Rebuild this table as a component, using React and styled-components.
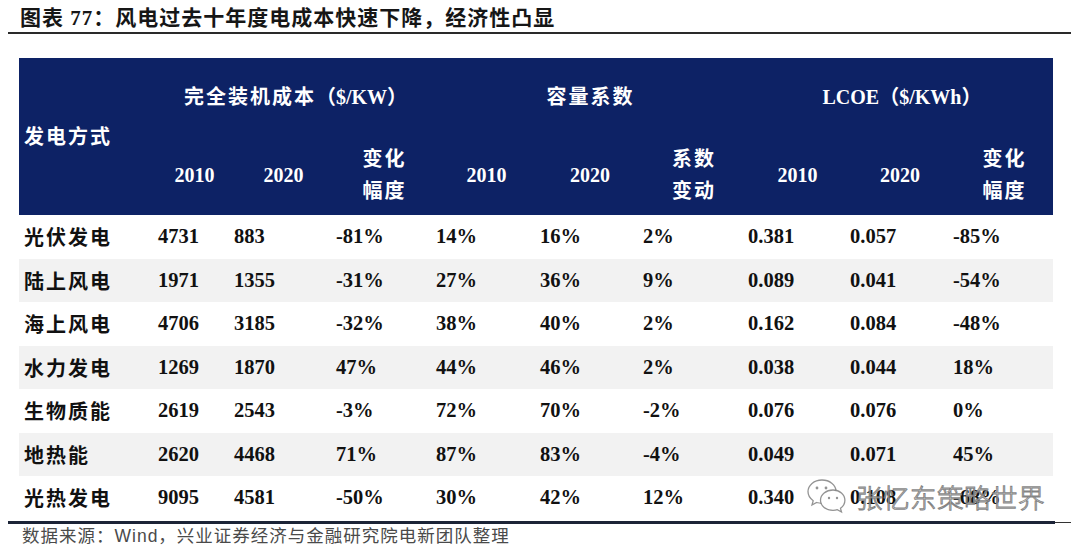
import React from "react";
import styled, { createGlobalStyle } from "styled-components";

const GlobalStyle = createGlobalStyle`
  html, body {
    margin: 0;
    padding: 0;
    background: #ffffff;
  }
  body {
    font-family: "Liberation Serif", "Noto Sans CJK SC", serif;
  }
`;

const Page = styled.div`
  position: relative;
  width: 1080px;
  height: 549px;
  overflow: hidden;
  background: #fff;
`;

const Title = styled.div`
  height: 32px;
  padding-left: 20px;
  display: flex;
  align-items: center;
  font-family: "Liberation Serif", "Noto Sans CJK SC", serif;
  font-weight: 700;
  font-size: 21px;
  letter-spacing: 1px;
  color: #161616;
  white-space: nowrap;
`;

const TitleRule = styled.div`
  margin-left: 8px;
  width: 1063px;
  height: 2px;
  background: #2a2a2a;
`;

const Table = styled.div`
  margin: 24px 0 0 19px;
  width: 1034px;
`;

const cols = "133px 76px 102px 100px 104px 103px 105px 102px 103px 106px";

const Head = styled.div`
  display: grid;
  grid-template-columns: ${cols};
  grid-template-rows: 77px 80px;
  background: #0d2265;
  color: #ffffff;
  font-weight: 700;
  font-size: 20px;
`;

const HeadCell = styled.div`
  display: flex;
  align-items: center;
  justify-content: ${(p) => (p.$left ? "flex-start" : "center")};
  padding-left: ${(p) => (p.$left ? "5px" : "9px")};
  grid-column: ${(p) => p.$col || "auto"};
  grid-row: ${(p) => p.$row || "auto"};
  letter-spacing: ${(p) => (p.$cjk ? "2px" : "0")};
  line-height: 32px;
  text-align: left;
  white-space: nowrap;
`;

const Row = styled.div`
  display: grid;
  grid-template-columns: ${cols};
  height: 43.5px;
  background: ${(p) => (p.$striped ? "#f2f2f2" : "#ffffff")};
  color: #111;
  font-weight: 700;
  font-size: 20.5px;
`;

const Cell = styled.div`
  display: flex;
  align-items: center;
  padding-left: ${(p) => (p.$first ? "5px" : "6px")};
  letter-spacing: ${(p) => (p.$first ? "2px" : "0")};
  font-size: ${(p) => (p.$first ? "20px" : "inherit")};
  white-space: nowrap;
`;

const BottomRule = styled.div`
  position: relative;
  margin: 1px 0 0 8px;
  width: 1047px;
  height: 3px;
  background: #1c2437;
  &::after {
    content: "";
    position: absolute;
    left: 1047px;
    top: 1px;
    width: 16px;
    height: 1px;
    background: #333;
  }
`;

const Source = styled.div`
  padding: 1px 0 0 22px;
  line-height: 22px;
  font-family: "Liberation Sans", "Noto Sans CJK SC", sans-serif;
  font-size: 17.5px;
  letter-spacing: 1px;
  color: #4a4a4a;
  white-space: nowrap;
`;

const Watermark = styled.div`
  position: absolute;
  left: 806px;
  top: 476px;
  display: flex;
  align-items: center;
  gap: 8px;
  pointer-events: none;
`;

const MarkText = styled.span`
  font-family: "Noto Sans CJK SC", sans-serif;
  font-weight: 300;
  font-size: 26.5px;
  color: rgba(255, 255, 255, 0.7);
  -webkit-text-stroke: 1px rgba(110, 110, 110, 0.85);
  letter-spacing: 0.5px;
`;

const WeChatIcon = () => (
  <svg width="42" height="40" viewBox="0 0 42 40" fill="rgba(255,255,255,0.6)">
    <path
      d="M16 4C8 4 2 9.2 2 15.6c0 3.7 2 6.9 5.2 9.1L6 29l4.6-2.5c1.7.5 3.5.8 5.4.8"
      stroke="rgba(120,120,120,0.8)"
      strokeWidth="1.3"
    />
    <path
      d="M16 4c7.6 0 13.7 4.8 14 10.9"
      stroke="rgba(120,120,120,0.8)"
      strokeWidth="1.3"
      fill="none"
    />
    <path
      d="M27 14c-7 0-12.5 4.6-12.5 10.2S20 34.4 27 34.4c1.5 0 3-.2 4.3-.7L35.5 36l-1-3.7c2.7-1.9 4.4-4.7 4.4-8C38.9 18.6 33.6 14 27 14z"
      stroke="rgba(120,120,120,0.8)"
      strokeWidth="1.3"
    />
    <circle cx="11" cy="12" r="1.4" fill="rgba(120,120,120,0.8)" />
    <circle cx="20" cy="12" r="1.4" fill="rgba(120,120,120,0.8)" />
    <circle cx="23" cy="22" r="1.2" fill="rgba(120,120,120,0.8)" />
    <circle cx="31" cy="22" r="1.2" fill="rgba(120,120,120,0.8)" />
  </svg>
);

const rows = [
  ["光伏发电", "4731", "883", "-81%", "14%", "16%", "2%", "0.381", "0.057", "-85%"],
  ["陆上风电", "1971", "1355", "-31%", "27%", "36%", "9%", "0.089", "0.041", "-54%"],
  ["海上风电", "4706", "3185", "-32%", "38%", "40%", "2%", "0.162", "0.084", "-48%"],
  ["水力发电", "1269", "1870", "47%", "44%", "46%", "2%", "0.038", "0.044", "18%"],
  ["生物质能", "2619", "2543", "-3%", "72%", "70%", "-2%", "0.076", "0.076", "0%"],
  ["地热能", "2620", "4468", "71%", "87%", "83%", "-4%", "0.049", "0.071", "45%"],
  ["光热发电", "9095", "4581", "-50%", "30%", "42%", "12%", "0.340", "0.108", "-68%"],
];

export default function App() {
  return (
    <Page>
      <GlobalStyle />
      <Title>图表 77：风电过去十年度电成本快速下降，经济性凸显</Title>
      <TitleRule />
      <Table>
        <Head>
          <HeadCell $left $cjk $col="1" $row="1 / span 2">发电方式</HeadCell>
          <HeadCell $col="2 / span 3" $row="1">
            <span style={{ letterSpacing: "2px" }}>完全装机成本</span>（$/KW）
          </HeadCell>
          <HeadCell $cjk $col="5 / span 3" $row="1">容量系数</HeadCell>
          <HeadCell $col="8 / span 3" $row="1">LCOE（$/KWh）</HeadCell>
          <HeadCell $row="2">2010</HeadCell>
          <HeadCell $row="2">2020</HeadCell>
          <HeadCell $cjk $row="2">变化<br />幅度</HeadCell>
          <HeadCell $row="2">2010</HeadCell>
          <HeadCell $row="2">2020</HeadCell>
          <HeadCell $cjk $row="2">系数<br />变动</HeadCell>
          <HeadCell $row="2">2010</HeadCell>
          <HeadCell $row="2">2020</HeadCell>
          <HeadCell $cjk $row="2">变化<br />幅度</HeadCell>
        </Head>
        {rows.map((r, i) => (
          <Row key={r[0]} $striped={i % 2 === 1}>
            {r.map((v, j) => (
              <Cell key={j} $first={j === 0}>{v}</Cell>
            ))}
          </Row>
        ))}
      </Table>
      <BottomRule />
      <Source>数据来源：Wind，兴业证券经济与金融研究院电新团队整理</Source>
      <Watermark>
        <WeChatIcon />
        <MarkText>张忆东策略世界</MarkText>
      </Watermark>
    </Page>
  );
}
